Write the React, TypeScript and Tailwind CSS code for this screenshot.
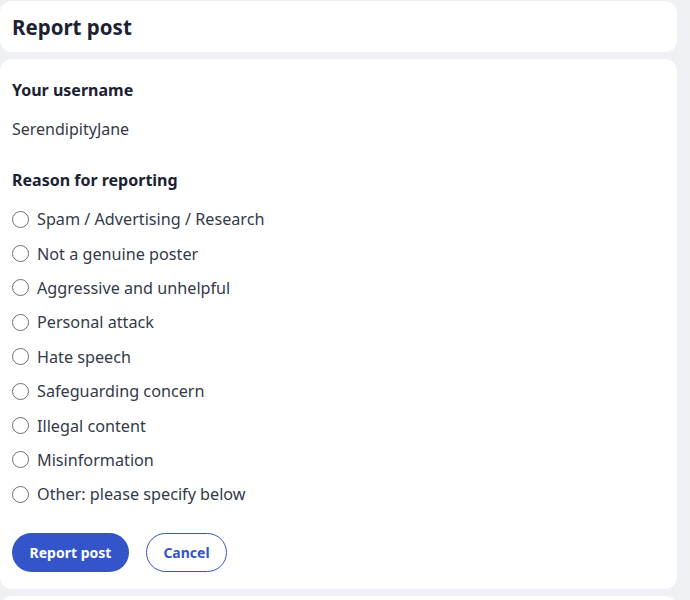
import { useState } from 'react'

const REASONS = [
  'Spam / Advertising / Research',
  'Not a genuine poster',
  'Aggressive and unhelpful',
  'Personal attack',
  'Hate speech',
  'Safeguarding concern',
  'Illegal content',
  'Misinformation',
  'Other: please specify below',
]

export default function App() {
  const [reason, setReason] = useState<string | null>(null)

  return (
    <div className="min-h-screen bg-[#eef0f3] pr-[13px] pt-px font-['Noto_Sans',sans-serif] text-[#1c2233]">
      <div className="flex flex-col gap-[7px]">
        <div className="flex h-[51px] items-center rounded-xl bg-white px-3">
          <h1 className="text-[20.5px] font-bold leading-7 text-[#1c2233]">Report post</h1>
        </div>

        <form
          className="rounded-xl bg-white px-3 pb-[17px] pt-[19px]"
          onSubmit={(event) => event.preventDefault()}
        >
          <p className="text-[16px] font-bold leading-6">Your username</p>
          <p className="mt-[15px] text-[16px] leading-6 text-[#333a48]">SerendipityJane</p>

          <div className="mt-[27px]" role="radiogroup" aria-label="Reason for reporting">
            <p className="text-[16px] font-bold leading-6">Reason for reporting</p>
            <div className="mt-[10px] flex flex-col">
              {REASONS.map((label) => (
                <label
                  key={label}
                  className="flex h-[34.4px] cursor-pointer items-center gap-[8px] text-[16.2px] leading-6 text-[#333a48]"
                >
                  <span className="flex h-[17px] w-[17px] shrink-0 items-center justify-center rounded-full border-[1.5px] border-[#6b6f78] bg-white">
                    {reason === label && <span className="h-[9px] w-[9px] rounded-full bg-[#3355c9]" />}
                  </span>
                  <input
                    type="radio"
                    name="reason"
                    className="sr-only"
                    checked={reason === label}
                    onChange={() => setReason(label)}
                  />
                  {label}
                </label>
              ))}
            </div>
          </div>

          <div className="mt-[21px] flex items-center gap-[17px]">
            <button
              type="submit"
              className="h-[39px] w-[117px] rounded-full bg-[#3355c9] text-[14px] font-bold text-white"
            >
              Report post
            </button>
            <button
              type="button"
              className="h-[39px] w-[81px] rounded-full border border-[#3355c9] bg-white text-[14px] font-bold text-[#3355c9]"
            >
              Cancel
            </button>
          </div>
        </form>

        <div className="h-16 rounded-xl bg-white" />
      </div>
    </div>
  )
}
